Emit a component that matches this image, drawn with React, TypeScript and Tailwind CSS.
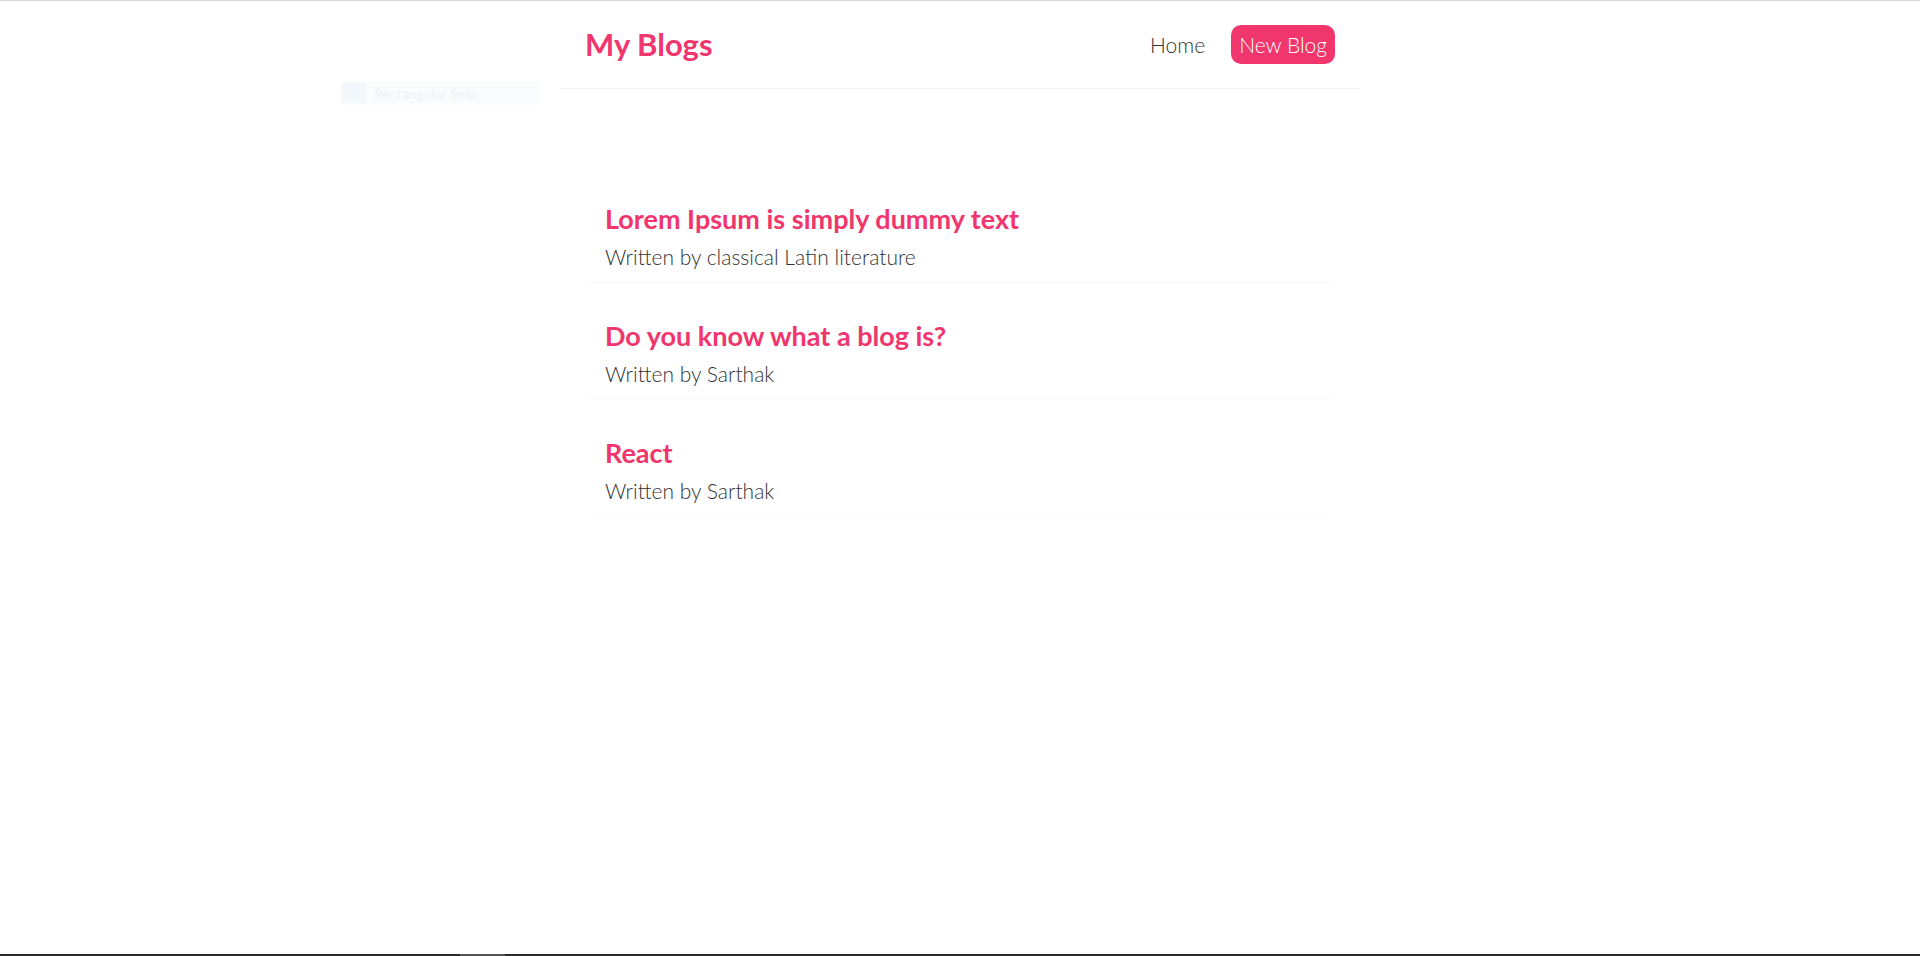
const PINK = "#f1356d";

const blogs = [
  { id: 1, title: "Lorem Ipsum is simply dummy text", author: "classical Latin literature" },
  { id: 2, title: "Do you know what a blog is?", author: "Sarthak" },
  { id: 3, title: "React", author: "Sarthak" },
];

export default function App() {
  return (
    <div
      className="relative flex h-[956px] flex-col border-t border-[#d4d4d4] bg-white text-[#333]"
      style={{ fontFamily: "Lato, 'Noto Sans', sans-serif" }}
    >
      {/* faint snipping-tool ghost left over in the capture */}
      <div className="absolute left-[340px] top-[80px] flex h-[24px] w-[201px] items-center gap-[8px] bg-[#fafcfe] px-[2px]">
        <span className="h-[20px] w-[24px] bg-[#f2f7fc]" />
        <span className="text-[14px] text-[#eef2f7]">Rectangular Snip</span>
      </div>

      <nav className="mx-auto flex h-[88px] w-[800px] items-center border-b border-[#f2f2f2] pr-[25px] pl-[25px]">
        <h1 className="text-[31px] font-bold" style={{ color: PINK }}>
          My Blogs
        </h1>
        <div className="ml-auto flex items-center">
          <a href="#" className="p-[8px] text-[21px] font-light text-[#333]">
            Home
          </a>
          <a
            href="#"
            className="ml-[18px] rounded-[10px] px-[8px] py-[4px] text-[21px] font-light text-white"
            style={{ background: PINK }}
          >
            New Blog
          </a>
        </div>
      </nav>

      <main className="mx-auto w-[800px] flex-1 px-[27px] pt-[103px]">
        {blogs.map((b) => (
          <div
            key={b.id}
            className="mb-[26px] border-b border-[#fafafa] px-[18px] pt-[11px] pb-[12px]"
          >
            <h2 className="mb-[9px] text-[27px] leading-[32px] font-bold" style={{ color: PINK }}>
              {b.title}
            </h2>
            <p className="text-[21px] leading-[26px] font-light text-[#333]">Written by {b.author}</p>
          </div>
        ))}
      </main>

      <div className="flex h-[2px] bg-[#2b2b2b]">
        <span className="ml-[460px] w-[45px] bg-[#555]" />
      </div>
    </div>
  );
}
